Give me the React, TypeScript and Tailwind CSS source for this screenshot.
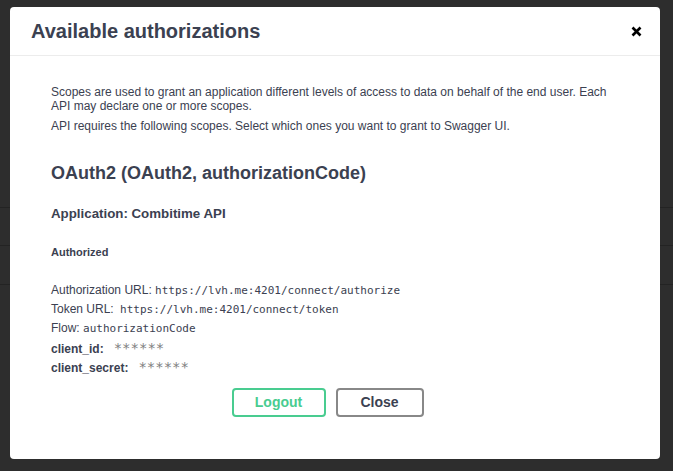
import React from "react";

const sans = { fontFamily: '"Liberation Sans", Arial, sans-serif' };
const mono = { fontFamily: '"DejaVu Sans Mono", monospace' };

export default function App() {
  return (
    <div className="relative h-[471px] w-[673px] overflow-hidden bg-[#2d2d2d]" style={sans}>
      {/* backdrop page content */}
      <div className="flex flex-col pt-[207px]">
        <div className="h-[38px] border-t border-[#232323]" />
        <div className="h-[39px] border-t border-[#232323]" />
        <div className="border-t border-[#232323]" />
      </div>

      {/* modal */}
      <div className="absolute left-[10px] top-[7px] flex h-[452px] w-[650px] flex-col rounded-[4px] bg-white text-[#3b4151]">
        <div className="flex h-[49px] items-center justify-between border-b border-[#ececec] pl-[21px] pr-[17px]">
          <h3 className="text-[20px] font-bold leading-none">Available authorizations</h3>
          <button className="flex h-[14px] w-[14px] items-center justify-center">
            <svg width="11" height="11" viewBox="0 0 11 11">
              <path d="M1.5 1.5 L9.5 9.5 M9.5 1.5 L1.5 9.5" stroke="#000" strokeWidth="2.6" strokeLinecap="butt" />
            </svg>
          </button>
        </div>

        <div className="flex flex-col pl-[41px] pr-[40px] pt-[29px]">
          <p className="text-[12px] leading-[14px]">
            Scopes are used to grant an application different levels of access to data on behalf of the end user. Each API may declare one or more scopes.
          </p>
          <p className="mt-[6px] text-[12px] leading-[14px]">
            API requires the following scopes. Select which ones you want to grant to Swagger UI.
          </p>

          <h4 className="mt-[29px] text-[18px] font-bold leading-[22px]">OAuth2 (OAuth2, authorizationCode)</h4>
          <h6 className="mt-[21px] text-[13.3px] font-bold leading-[17px]">Application: Combitime API</h6>
          <h6 className="mt-[24px] text-[11px] font-bold leading-[13px]">Authorized</h6>

          <div className="mt-[22px] flex flex-col text-[12px]">
            <p className="h-[19px] leading-[19px]">
              Authorization URL:{" "}
              <code className="text-[11px] leading-none" style={mono}>
                https://lvh.me:4201/connect/authorize
              </code>
            </p>
            <p className="h-[18.5px] leading-[18.5px]">
              Token URL:{" "}
              <code className="ml-[3px] text-[11px] leading-none" style={mono}>
                https://lvh.me:4201/connect/token
              </code>
            </p>
            <p className="h-[18.5px] leading-[18.5px]">
              Flow:{" "}
              <code className="text-[11px] leading-none" style={mono}>
                authorizationCode
              </code>
            </p>
          </div>

          <div className="mt-[3px] flex flex-col text-[12px]">
            <div className="flex h-[19px] items-baseline leading-[19px]">
              <span className="font-bold">client_id:</span>
              <code className="ml-[10px] text-[14px] leading-none text-[#808080]" style={mono}>
                ******
              </code>
            </div>
            <div className="flex h-[19px] items-baseline leading-[19px]">
              <span className="font-bold">client_secret:</span>
              <code className="ml-[10px] text-[14px] leading-none text-[#808080]" style={mono}>
                ******
              </code>
            </div>
          </div>

          <div className="mt-[10px] flex justify-center gap-[10px] pr-[16px]">
            <button className="h-[29px] w-[94px] rounded-[4px] border-2 border-[#49cc90] text-[14px] font-bold text-[#49cc90]">
              Logout
            </button>
            <button className="h-[29px] w-[88px] rounded-[4px] border-2 border-[#888888] text-[14px] font-bold text-[#3b4151]">
              Close
            </button>
          </div>
        </div>
      </div>
    </div>
  );
}
